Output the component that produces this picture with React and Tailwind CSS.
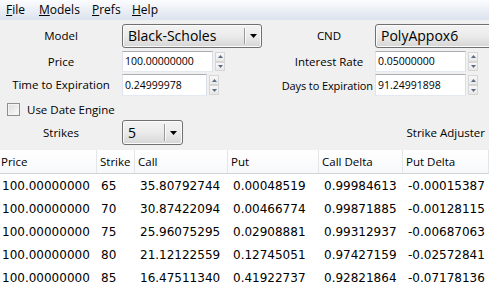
import React from "react";

function Arrow() {
  return (
    <svg width="7" height="4" viewBox="0 0 7 4">
      <path d="M0 0H7L3.5 4Z" fill="#000" />
    </svg>
  );
}

function Combo({ className, text, arrowW }) {
  return (
    <div
      className={`flex h-full shrink-0 items-stretch rounded-[3px] border border-[#707070] bg-linear-to-b from-[#f3f3f3] via-[#ebebeb] to-[#d6d6d6] shadow-[inset_0_0_0_1px_#fbfbfb] ${className}`}
    >
      <div className="flex flex-1 items-center pl-[5px] text-[14px] leading-none text-black">
        {text}
      </div>
      <div className={`my-[3px] flex items-center justify-center border-l border-[#9a9a9a] shadow-[inset_1px_0_0_#fafafa] ${arrowW}`}>
        <Arrow />
      </div>
    </div>
  );
}

function SpinBtn({ up }) {
  return (
    <div className="flex flex-1 items-center justify-center border border-[#d6d6d6] bg-linear-to-b from-[#f8f8f8] to-[#e8e8e8]">
      <svg width="5" height="3" viewBox="0 0 5 3">
        <path d={up ? "M0 3H5L2.5 0Z" : "M0 0H5L2.5 3Z"} fill="#5b6b82" />
      </svg>
    </div>
  );
}

function Spin({ inputW, value }) {
  return (
    <div className="flex h-full shrink-0 items-stretch gap-[2px]">
      <div
        className={`flex shrink-0 items-center border border-[#abadb3] border-b-[#e3e9ef] border-l-[#e2e3ea] border-r-[#dbdfe6] bg-white pl-[2px] text-[10.5px] leading-none text-black ${inputW}`}
      >
        {value}
      </div>
      <div className="flex w-[10px] shrink-0 flex-col py-px">
        <SpinBtn up />
        <SpinBtn />
      </div>
    </div>
  );
}

const rows = [
  ["100.00000000", "65", "35.80792744", "0.00048519", "0.99984613", "-0.00015387"],
  ["100.00000000", "70", "30.87422094", "0.00466774", "0.99871885", "-0.00128115"],
  ["100.00000000", "75", "25.96075295", "0.02908881", "0.99312937", "-0.00687063"],
  ["100.00000000", "80", "21.12122559", "0.12745051", "0.97427159", "-0.02572841"],
  ["100.00000000", "85", "16.47511340", "0.41922737", "0.92821864", "-0.07178136"],
];

const headers = ["Price", "Strike", "Call", "Put", "Call Delta", "Put Delta"];

export default function App() {
  return (
    <div className="flex h-[294px] w-[489px] flex-col overflow-hidden bg-[#f0f0f0] font-['Open_Sans',sans-serif] text-black">
      {/* Menu bar */}
      <div className="flex h-[20px] shrink-0 items-center bg-linear-to-b from-[#fbfcfe] to-[#dce3ee] pl-[6px] text-[12px] leading-none">
        <span className="w-[33px]"><u>F</u>ile</span>
        <span className="w-[53px]"><u>M</u>odels</span>
        <span className="w-[40px]"><u>P</u>refs</span>
        <span><u>H</u>elp</span>
      </div>

      {/* Form */}
      <div className="flex shrink-0 flex-col text-[11.5px] leading-none">
        <div className="mt-[4px] flex h-[24px] items-center">
          <div className="flex w-[122px] shrink-0 justify-center">Model</div>
          <Combo className="w-[140px]" text="Black-Scholes" arrowW="w-[17px]" />
          <div className="ml-[21px] flex w-[92px] shrink-0 justify-center">CND</div>
          <Combo className="w-[140px]" text="PolyAppox6" arrowW="w-[17px]" />
        </div>
        <div className="mt-[3px] flex h-[21px] items-center">
          <div className="flex w-[122px] shrink-0 justify-center">Price</div>
          <div className="h-full w-[161px] shrink-0">
            <Spin inputW="w-[91px]" value="100.00000000" />
          </div>
          <div className="flex w-[92px] shrink-0 justify-center">Interest Rate</div>
          <Spin inputW="w-[91px]" value="0.05000000" />
        </div>
        <div className="mt-[2px] flex h-[22px] items-center">
          <div className="flex w-[122px] shrink-0 justify-center whitespace-nowrap">Time to Expiration</div>
          <div className="h-full w-[159px] shrink-0">
            <Spin inputW="w-[85px]" value="0.24999978" />
          </div>
          <div className="mr-[2px] flex w-[92px] shrink-0 justify-end whitespace-nowrap text-[11px] tracking-[-0.1px]">Days to Expiration</div>
          <Spin inputW="w-[91px]" value="91.24991898" />
        </div>
        <div className="mt-[7px] flex h-[13px] items-center pl-[7px]">
          <div className="h-[13px] w-[13px] border border-[#8e8f8f] bg-linear-to-br from-[#dcdcdc] to-[#fbfbfb] shadow-[inset_0_0_0_1px_#f4f4f4]" />
          <span className="ml-[7px]">Use Date Engine</span>
        </div>
        <div className="mt-[4px] flex h-[25px] items-center">
          <div className="flex w-[122px] shrink-0 justify-center">Strikes</div>
          <Combo className="w-[61px]" text="5" arrowW="w-[18px]" />
          <div className="ml-auto pr-[4px]">Strike Adjuster</div>
        </div>
      </div>

      {/* Table */}
      <div className="mt-[5px] flex flex-1 flex-col bg-white">
        <div className="grid h-[24px] shrink-0 grid-cols-[97px_38px_93px_91px_84px_1fr] border-b border-[#d5d5d5] bg-linear-to-b from-white to-[#f7f8fa] text-[11.5px] leading-none">
          {headers.map((h, i) => (
            <div
              key={h}
              className={`flex items-center whitespace-nowrap border-r border-[#e3e5e8] ${i === 0 ? "pl-[1px]" : "pl-[3px]"}`}
            >
              {h}
            </div>
          ))}
        </div>
        <div className="flex flex-col font-['DejaVu_Sans',sans-serif] text-[12px] leading-none">
          {rows.map((r, ri) => (
            <div key={ri} className="grid h-[23px] grid-cols-[97px_38px_93px_91px_84px_1fr]">
              {r.map((c, i) => (
                <div
                  key={i}
                  className={`flex items-center whitespace-nowrap ${i === 0 ? "pl-[2px]" : i === 1 ? "pl-[4px]" : "pl-[5px]"}`}
                >
                  {c}
                </div>
              ))}
            </div>
          ))}
        </div>
      </div>
    </div>
  );
}
